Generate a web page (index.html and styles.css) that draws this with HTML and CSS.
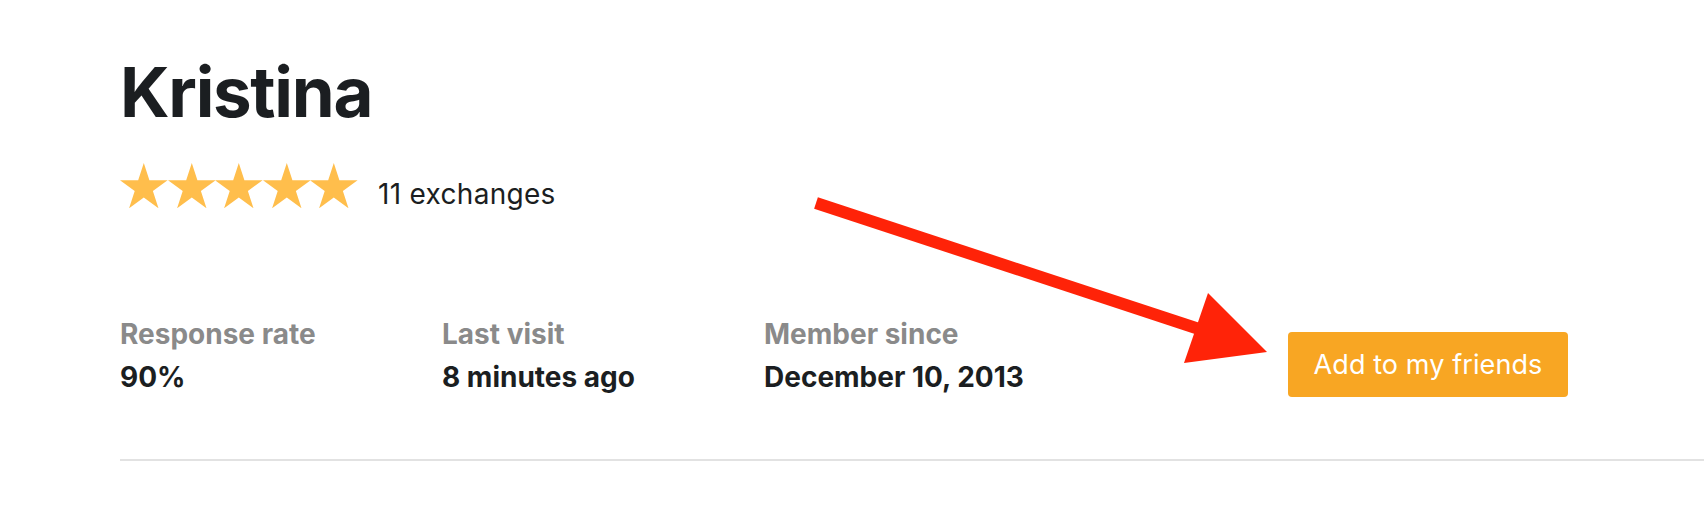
FILE: index.html
```html
<!DOCTYPE html>
<html lang="en">
<head>
<meta charset="utf-8">
<title>Kristina</title>
<link rel="stylesheet" href="styles.css">
</head>
<body>
<main class="profile">
  <h1 class="name">Kristina</h1>
  <div class="rating">
    <div class="stars">
      <svg class="star" viewBox="1.22 0 47.56 45.23"><polygon points="25,0 30.61,17.27 48.78,17.27 34.08,27.95 39.69,45.23 25,34.55 10.31,45.23 15.92,27.95 1.22,17.27 19.39,17.27"/></svg>
      <svg class="star" viewBox="1.22 0 47.56 45.23"><polygon points="25,0 30.61,17.27 48.78,17.27 34.08,27.95 39.69,45.23 25,34.55 10.31,45.23 15.92,27.95 1.22,17.27 19.39,17.27"/></svg>
      <svg class="star" viewBox="1.22 0 47.56 45.23"><polygon points="25,0 30.61,17.27 48.78,17.27 34.08,27.95 39.69,45.23 25,34.55 10.31,45.23 15.92,27.95 1.22,17.27 19.39,17.27"/></svg>
      <svg class="star" viewBox="1.22 0 47.56 45.23"><polygon points="25,0 30.61,17.27 48.78,17.27 34.08,27.95 39.69,45.23 25,34.55 10.31,45.23 15.92,27.95 1.22,17.27 19.39,17.27"/></svg>
      <svg class="star" viewBox="1.22 0 47.56 45.23"><polygon points="25,0 30.61,17.27 48.78,17.27 34.08,27.95 39.69,45.23 25,34.55 10.31,45.23 15.92,27.95 1.22,17.27 19.39,17.27"/></svg>
    </div>
    <span class="exchanges">11 exchanges</span>
  </div>
  <div class="stats">
    <div class="cols">
      <div class="stat">
        <div class="label">Response rate</div>
        <div class="value">90%</div>
      </div>
      <div class="stat">
        <div class="label">Last visit</div>
        <div class="value">8 minutes ago</div>
      </div>
      <div class="stat">
        <div class="label">Member since</div>
        <div class="value">December 10, 2013</div>
      </div>
    </div>
    <button class="add-btn" type="button">Add to my friends</button>
  </div>
  <hr class="divider">
</main>
<svg class="annotation" width="1704" height="524" viewBox="0 0 1704 524">
  <line x1="816" y1="203" x2="1202" y2="330" stroke="#ff2308" stroke-width="12"/>
  <polygon points="1208,293 1267,352 1184,363" fill="#ff2308"/>
</svg>
</body>
</html>
```
FILE: styles.css
```css
html, body {
  margin: 0;
  padding: 0;
  background: #ffffff;
}

body {
  position: relative;
  width: 1704px;
  height: 524px;
  overflow: hidden;
  font-family: "Inter", "Liberation Sans", sans-serif;
  color: #1b1e21;
}

.profile {
  padding: 50px 0 0 120px;
}

.name {
  margin: 0;
  font-size: 69px;
  line-height: 84px;
  font-weight: 700;
  letter-spacing: -1.3px;
}

.rating {
  display: flex;
  align-items: flex-end;
  margin-top: 28px;
  height: 46px;
}

.stars {
  display: flex;
}

.star {
  width: 47.6px;
  height: 45.3px;
  fill: #ffbe4c;
  display: block;
}

.exchanges {
  margin-left: 20px;
  font-size: 28px;
  line-height: 32px;
  letter-spacing: 0.3px;
  margin-bottom: -2px;
}

.stats {
  display: flex;
  align-items: flex-start;
  justify-content: space-between;
  padding-right: 136px;
  margin-top: 106px;
}

.cols {
  display: flex;
}

.stat {
  width: 322px;
}

.label {
  font-size: 28px;
  line-height: 40px;
  font-weight: 700;
  color: #8a8a8a;
}

.value {
  padding-top: 3px;
  font-size: 28px;
  line-height: 40px;
  font-weight: 700;
  color: #1b1e21;
}

.add-btn {
  margin-top: 18px;
  width: 280px;
  height: 65px;
  border: none;
  border-radius: 4px;
  background: #f8a623;
  color: #ffffff;
  font-family: "Inter", "Liberation Sans", sans-serif;
  font-size: 27px;
  letter-spacing: 0.1px;
  font-weight: 400;
  padding: 0;
}

.divider {
  margin: 62px 0 0 0;
  border: none;
  height: 2px;
  background: #e2e2e2;
}

.annotation {
  position: absolute;
  left: 0;
  top: 0;
  pointer-events: none;
}
```
